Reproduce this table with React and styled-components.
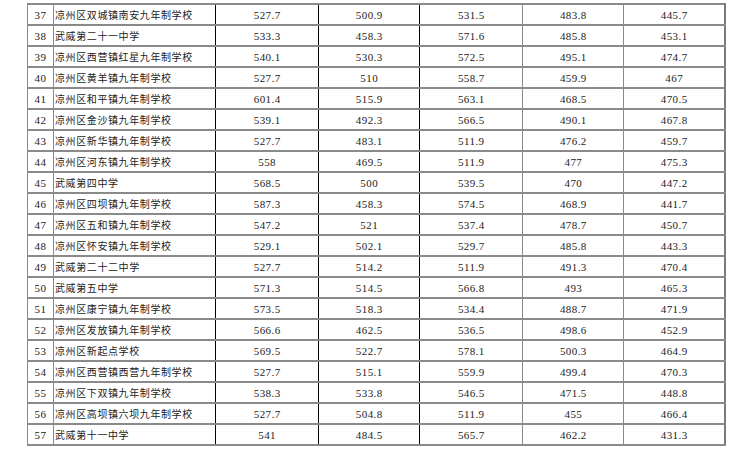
import React from "react";
import styled, { createGlobalStyle } from "styled-components";

const GlobalStyle = createGlobalStyle`
  html, body {
    margin: 0;
    padding: 0;
    background: #ffffff;
  }
`;

const rows = [
  [37, "凉州区双城镇南安九年制学校", "527.7", "500.9", "531.5", "483.8", "445.7"],
  [38, "武威第二十一中学", "533.3", "458.3", "571.6", "485.8", "453.1"],
  [39, "凉州区西营镇红星九年制学校", "540.1", "530.3", "572.5", "495.1", "474.7"],
  [40, "凉州区黄羊镇九年制学校", "527.7", "510", "558.7", "459.9", "467"],
  [41, "凉州区和平镇九年制学校", "601.4", "515.9", "563.1", "468.5", "470.5"],
  [42, "凉州区金沙镇九年制学校", "539.1", "492.3", "566.5", "490.1", "467.8"],
  [43, "凉州区新华镇九年制学校", "527.7", "483.1", "511.9", "476.2", "459.7"],
  [44, "凉州区河东镇九年制学校", "558", "469.5", "511.9", "477", "475.3"],
  [45, "武威第四中学", "568.5", "500", "539.5", "470", "447.2"],
  [46, "凉州区四坝镇九年制学校", "587.3", "458.3", "574.5", "468.9", "441.7"],
  [47, "凉州区五和镇九年制学校", "547.2", "521", "537.4", "478.7", "450.7"],
  [48, "凉州区怀安镇九年制学校", "529.1", "502.1", "529.7", "485.8", "443.3"],
  [49, "武威第二十二中学", "527.7", "514.2", "511.9", "491.3", "470.4"],
  [50, "武威第五中学", "571.3", "514.5", "566.8", "493", "465.3"],
  [51, "凉州区康宁镇九年制学校", "573.5", "518.3", "534.4", "488.7", "471.9"],
  [52, "凉州区发放镇九年制学校", "566.6", "462.5", "536.5", "498.6", "452.9"],
  [53, "凉州区新起点学校", "569.5", "522.7", "578.1", "500.3", "464.9"],
  [54, "凉州区西营镇西营九年制学校", "527.7", "515.1", "559.9", "499.4", "470.3"],
  [55, "凉州区下双镇九年制学校", "538.3", "533.8", "546.5", "471.5", "448.8"],
  [56, "凉州区高坝镇六坝九年制学校", "527.7", "504.8", "511.9", "455", "466.4"],
  [57, "武威第十一中学", "541", "484.5", "565.7", "462.2", "431.3"],
];

// column widths and the colour of each column's right rule
const cols = [
  { width: 26, rule: "gray" },
  { width: 162, rule: "black" },
  { width: 103, rule: "black" },
  { width: 101, rule: "black" },
  { width: 103, rule: "gray" },
  { width: 101, rule: "gray" },
  { width: 101, rule: "edge" },
];

const Page = styled.div`
  padding: 3px 0 0 27px;
`;

const Table = styled.table`
  border-collapse: collapse;
  table-layout: fixed;
  width: 699px;
  border-top: 2px solid #8a8a8a;
  border-left: 1px solid #8a8a8a;
`;

const Row = styled.tr`
  height: 21px;
`;

const ruleFor = (rule) => {
  if (rule === "black") return "1px solid #000";
  if (rule === "edge") return "2px solid #7a7a7a";
  return "1px solid #8a8a8a";
};

const Cell = styled.td`
  padding: 0;
  height: 19px;
  border-bottom: 2px solid #8a8a8a;
  border-right: ${(p) => ruleFor(p.$rule)};
  color: #1c1c1c;
  white-space: nowrap;
  overflow: hidden;
  vertical-align: middle;
`;

const NumCell = styled(Cell)`
  text-align: center;
  font-family: "Liberation Serif", serif;
  font-size: 11px;
  letter-spacing: 0.4px;
`;

const NameCell = styled(Cell)`
  text-align: left;
  padding-left: 1px;
  font-family: "Noto Sans CJK SC", "Noto Sans", sans-serif;
  font-size: 10px;
  letter-spacing: 0.6px;
`;

export default function App() {
  return (
    <Page>
      <GlobalStyle />
      <Table>
        <colgroup>
          {cols.map((c, i) => (
            <col key={i} style={{ width: c.width }} />
          ))}
        </colgroup>
        <tbody>
          {rows.map((r) => (
            <Row key={r[0]}>
              <NumCell $rule={cols[0].rule}>{r[0]}</NumCell>
              <NameCell $rule={cols[1].rule}>{r[1]}</NameCell>
              {r.slice(2).map((v, i) => (
                <NumCell key={i} $rule={cols[i + 2].rule}>
                  {v}
                </NumCell>
              ))}
            </Row>
          ))}
        </tbody>
      </Table>
    </Page>
  );
}
